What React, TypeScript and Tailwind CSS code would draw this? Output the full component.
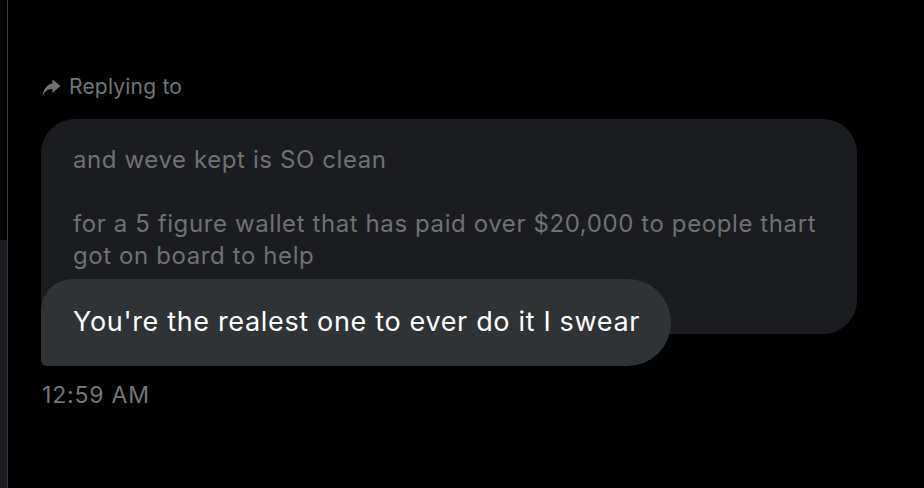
import React from 'react'

function ReplyIcon() {
  return (
    <svg viewBox="0 0 20 20" className="w-[19px] h-[19px]" fill="#71767b">
      <path d="M11 1.5 L19.5 8.5 L11 15.5 V11.6 C6.4 11.5 3.4 13.6 0.8 18.2 C1.6 11.6 5.4 6.6 11 5.7 Z" />
    </svg>
  )
}

export default function App() {
  const font = { fontFamily: 'Inter, "Noto Sans", sans-serif' }
  return (
    <div className="w-[924px] h-[488px] bg-black flex overflow-hidden" style={font}>
      {/* left rail */}
      <div className="w-[8px] flex flex-col border-r border-[#3a3a3c]">
        <div className="h-[240px]" />
        <div className="flex-1 bg-[#1c1d20]" />
      </div>

      <div className="flex-1 flex flex-col pl-[33px] pt-[75px]">
        <div className="flex items-center gap-[8px] pl-[1px] h-[24px] text-[21px] tracking-[0.2px] text-[#71767b]">
          <ReplyIcon />
          <span>Replying to</span>
        </div>

        <div className="mt-[20px] w-[816px] h-[215px] rounded-[34px] bg-[#1b1c1f] px-[32px] pt-[25px] text-[24px] leading-[32px] tracking-[0.6px] text-[#6e7175] whitespace-nowrap">
          <div>and weve kept is SO clean</div>
          <div className="h-[32px]" />
          <div>for a 5 figure wallet that has paid over $20,000 to people thart</div>
          <div>got on board to help</div>
        </div>

        <div className="-mt-[55px] self-start h-[87px] flex items-center bg-[#2f3336] rounded-tl-[32px] rounded-bl-[6px] rounded-r-[44px] pl-[32px] pr-[31px] text-[27px] tracking-[0.66px] text-white whitespace-nowrap">
          You're the realest one to ever do it I swear
        </div>

        <div className="mt-[17px] pl-[1px] text-[23px] leading-[24px] tracking-[0.8px] text-[#71767b]">12:59 AM</div>
      </div>
    </div>
  )
}
